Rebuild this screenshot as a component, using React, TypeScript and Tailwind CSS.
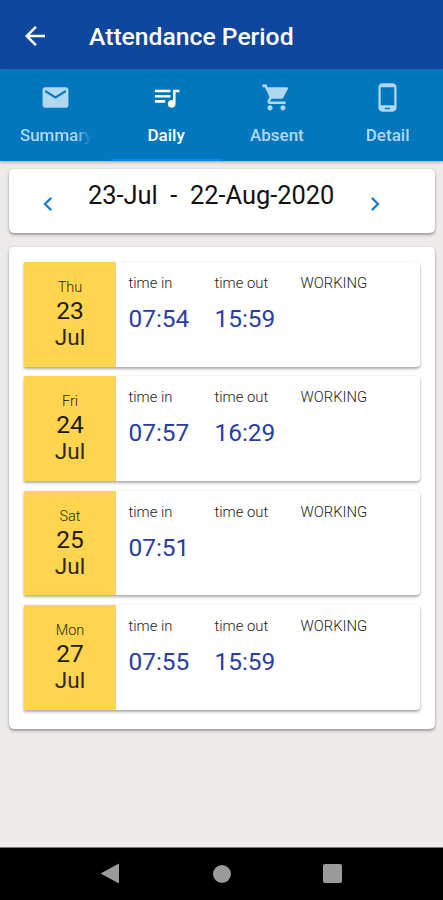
import type { IconType } from 'react-icons';
import {
  MdArrowBack,
  MdChevronLeft,
  MdChevronRight,
  MdEmail,
  MdPhoneAndroid,
  MdQueueMusic,
  MdShoppingCart,
} from 'react-icons/md';

type Tab = { label: string; icon: IconType; active?: boolean; clipped?: boolean };
type Day = { weekday: string; day: string; month: string; timeIn: string; timeOut?: string; status: string };

const tabs: Tab[] = [
  { label: 'Summary', icon: MdEmail, clipped: true },
  { label: 'Daily', icon: MdQueueMusic, active: true },
  { label: 'Absent', icon: MdShoppingCart },
  { label: 'Detail', icon: MdPhoneAndroid },
];

const days: Day[] = [
  { weekday: 'Thu', day: '23', month: 'Jul', timeIn: '07:54', timeOut: '15:59', status: 'WORKING' },
  { weekday: 'Fri', day: '24', month: 'Jul', timeIn: '07:57', timeOut: '16:29', status: 'WORKING' },
  { weekday: 'Sat', day: '25', month: 'Jul', timeIn: '07:51', status: 'WORKING' },
  { weekday: 'Mon', day: '27', month: 'Jul', timeIn: '07:55', timeOut: '15:59', status: 'WORKING' },
];

function TabItem({ label, icon: Icon, active, clipped }: Tab) {
  return (
    <div
      className={`flex flex-1 flex-col items-center border-b-2 pt-[13px] ${
        active ? 'border-[#0b86ee] text-white' : 'border-transparent text-[#b0d8f0]'
      }`}
    >
      <Icon size={31} />
      <span
        className={`mt-[10px] overflow-hidden whitespace-nowrap text-[17px] font-medium leading-6 ${
          clipped ? 'w-[71px] [mask-image:linear-gradient(to_right,black_78%,transparent)]' : ''
        }`}
      >
        {label}
      </span>
    </div>
  );
}

function DayCard({ weekday, day, month, timeIn, timeOut, status }: Day) {
  return (
    <div className="flex h-[104.5px] rounded-r-[4px] bg-white shadow-[0_2px_3px_rgba(0,0,0,0.32),0_0_2px_rgba(0,0,0,0.1)]">
      {/* date block */}
      <div className="flex w-[92px] flex-col items-center bg-[#ffd54f] pt-[17px] text-[#1d1a0c]">
        <span className="text-[14.5px] font-light leading-[18px] text-[#2e2810]">{weekday}</span>
        <span className="text-[24.5px] leading-[27px]">{day}</span>
        <span className="text-[22.5px] leading-[27px] text-[#2e2810]">{month}</span>
      </div>

      {/* times */}
      <div className="flex pl-[12.5px] pt-[12px]">
        <div className="w-[86px]">
          <div className="text-[14.8px] font-light leading-[18px] text-[#222]">time in</div>
          <div className="mt-[13px] text-[24.4px] leading-7 text-[#2a3da5]">{timeIn}</div>
        </div>
        <div className="w-[86px]">
          <div className="text-[14.8px] font-light leading-[18px] text-[#222]">time out</div>
          <div className="mt-[13px] text-[24.4px] leading-7 text-[#2a3da5]">{timeOut}</div>
        </div>
        <div className="text-[14.8px] font-light leading-[18px] text-[#222]">{status}</div>
      </div>
    </div>
  );
}

export default function App() {
  return (
    <div className="flex h-[900px] w-[443px] flex-col overflow-hidden bg-[#eeeae9] font-[Roboto,sans-serif]">
      {/* app bar */}
      <header className="flex h-[69px] items-center bg-[#0f479f] pl-[20px] pt-[4px] text-white">
        <MdArrowBack size={30} className="-mt-px" />
        <h1 className="ml-[39px] text-[24.7px] font-medium">Attendance Period</h1>
      </header>

      {/* tabs */}
      <nav className="z-10 flex h-[92px] bg-[#0277bd] shadow-[0_1px_3px_rgba(0,0,0,0.35)]">
        {tabs.map(tab => (
          <TabItem key={tab.label} {...tab} />
        ))}
      </nav>

      <main className="flex-1 pl-[9px] pr-[8px] pt-[8px]">
        {/* period switcher */}
        <div className="flex h-[64px] items-start rounded-[5px] bg-white shadow-[0_2px_3px_rgba(0,0,0,0.32),0_0_2px_rgba(0,0,0,0.12)]">
          <MdChevronLeft size={28} className="ml-[25px] mt-[21px] text-[#1b80cc]" />
          <div className="ml-[26px] w-[247px] whitespace-pre pt-[11px] text-[25.4px] leading-[30px] text-[#111]">
            23-Jul  -  22-Aug-2020
          </div>
          <MdChevronRight size={28} className="ml-[26px] mt-[21px] text-[#1b80cc]" />
        </div>

        {/* daily list */}
        <div className="mt-[14px] flex h-[482px] flex-col gap-[9.9px] rounded-[5px] bg-white px-[15px] pt-[15px] shadow-[0_2px_3px_rgba(0,0,0,0.32),0_0_2px_rgba(0,0,0,0.12)]">
          {days.map(d => (
            <DayCard key={d.day} {...d} />
          ))}
        </div>
      </main>

      {/* system navigation */}
      <footer className="flex h-[53px] items-center justify-between border-t border-[#777] bg-black pb-px pl-[100px] pr-[101px]">
        <svg width="20" height="21" viewBox="0 0 20 21" fill="#9b9b9b">
          <path d="M.5 10.5 19 .5v20z" />
        </svg>
        <div className="size-[18px] rounded-full bg-[#9b9b9b]" />
        <div className="size-[19px] rounded-[2px] bg-[#9b9b9b]" />
      </footer>
    </div>
  );
}
